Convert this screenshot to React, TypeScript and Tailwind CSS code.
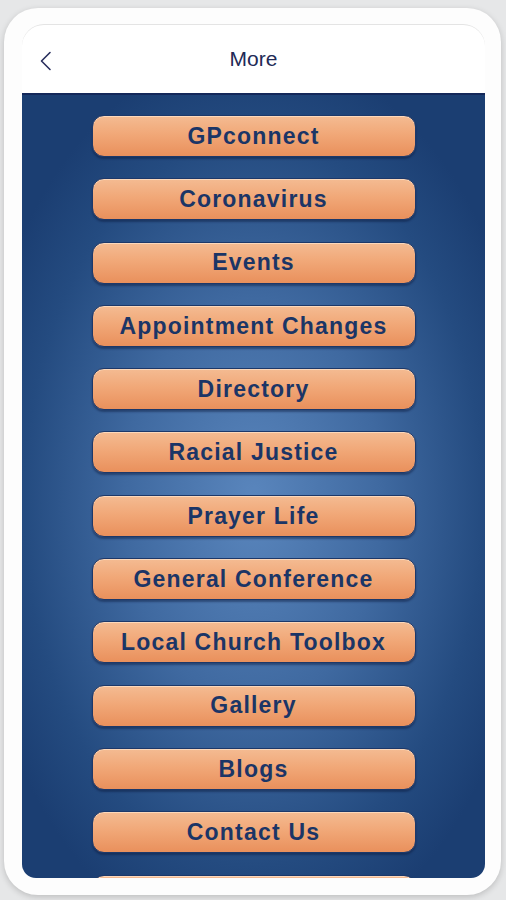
const items = [
  "GPconnect",
  "Coronavirus",
  "Events",
  "Appointment Changes",
  "Directory",
  "Racial Justice",
  "Prayer Life",
  "General Conference",
  "Local Church Toolbox",
  "Gallery",
  "Blogs",
  "Contact Us",
  "",
];

export default function App() {
  return (
    <div className="h-[900px] w-[506px] overflow-hidden bg-[#e6e7e8] pt-[8px] pl-[4px]" style={{ fontFamily: '"Liberation Sans", Arial, sans-serif' }}>
      <div className="h-[887px] w-[497px] rounded-[34px] bg-[#fdfdfd] pt-[16px] pl-[18px] shadow-[0_2px_6px_rgba(0,0,0,0.18)]">
        <div className="flex h-[854px] w-[463px] flex-col overflow-hidden rounded-t-[22px] rounded-b-[14px] border-t border-[#e4e4e4] bg-white">
          <header className="relative flex h-[70px] shrink-0 items-center justify-center border-b-2 border-[#14285a]">
            <svg className="absolute left-[17px] top-[26px]" width="14" height="20" viewBox="0 0 14 20" fill="none">
              <path d="M11 1.5 L2.5 10 L11 18.5" stroke="#2a2f5e" strokeWidth="1.6" strokeLinecap="round" strokeLinejoin="round" />
            </svg>
            <span className="text-[21px] text-[#222a56]">More</span>
          </header>
          <main className="flex flex-1 flex-col items-center gap-[21.3px] overflow-hidden bg-[radial-gradient(ellipse_62%_58%_at_50%_52%,#5a86bd_0%,#3f69a0_45%,#244b80_80%,#1b3e72_100%)] pt-[20px]">
            {items.map((label, i) => (
              <button
                key={i}
                className="flex h-[42px] w-[324px] shrink-0 items-center justify-center rounded-[12px] border-[1.5px] border-[#1d3869] bg-[linear-gradient(to_bottom,#f4bb92_0%,#f1a878_45%,#e9905c_100%)] text-[23px] font-bold tracking-[1.2px] text-[#1b3566] shadow-[0_2px_2px_rgba(10,25,60,0.45),inset_0_1px_0_rgba(255,230,205,0.7)]"
              >
                {label}
              </button>
            ))}
          </main>
        </div>
      </div>
    </div>
  );
}
